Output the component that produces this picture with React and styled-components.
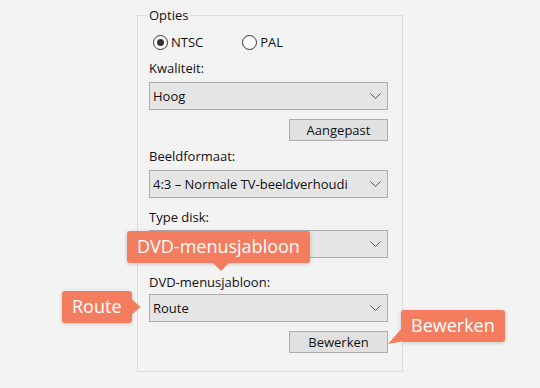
import React from "react";
import styled, { createGlobalStyle, css } from "styled-components";

const GlobalStyle = createGlobalStyle`
  html, body {
    margin: 0;
    background: #f3f3f3;
  }
`;

const Stage = styled.div`
  position: relative;
  width: 540px;
  height: 388px;
  box-sizing: border-box;
  padding: 6px 0 0 137px;
  font-family: "Open Sans", "Noto Sans", sans-serif;
  font-size: 12.5px;
  color: #111;
`;

const GroupBox = styled.fieldset`
  margin: 0;
  width: 266px;
  height: 366px;
  box-sizing: border-box;
  border: 1px solid #dcdcdc;
  padding: 8px 14px 0 11px;
`;

const Legend = styled.legend`
  font-size: 13px;
  line-height: 18px;
  padding: 0 2px;
  margin-left: -2px;
  color: #111;
`;

const Column = styled.div`
  display: flex;
  flex-direction: column;
  align-items: flex-start;
`;

const RadioRow = styled.div`
  display: flex;
  align-items: center;
  height: 20px;
  padding-left: 4px;
  gap: 39px;
`;

const RadioOption = styled.label`
  display: flex;
  align-items: center;
  gap: 3px;
  font-size: 13px;
`;

const RadioDot = styled.span`
  width: 15px;
  height: 15px;
  box-sizing: border-box;
  border-radius: 50%;
  border: 1px solid #333;
  background: #fff;
  display: flex;
  align-items: center;
  justify-content: center;

  ${(p) =>
    p.$checked &&
    css`
      &::after {
        content: "";
        width: 7px;
        height: 7px;
        border-radius: 50%;
        background: #333;
      }
    `}
`;

const FieldLabel = styled.div`
  line-height: 18px;
  font-size: 13px;
  margin-top: ${(p) => p.$gap}px;
`;

const Select = styled.div`
  width: 239px;
  height: 28px;
  box-sizing: border-box;
  margin-top: ${(p) => p.$gap}px;
  border: 1px solid #adadad;
  background: #e5e5e5;
  display: flex;
  align-items: center;
  justify-content: space-between;
  padding: 0 6px 0 3px;
  font-size: 13px;
  white-space: nowrap;
  overflow: hidden;
`;

const Button = styled.div`
  align-self: flex-end;
  width: 99px;
  height: 22px;
  box-sizing: border-box;
  margin-top: 9px;
  border: 1px solid #adadad;
  background: #e1e1e1;
  display: flex;
  align-items: center;
  justify-content: center;
  font-size: 13px;
`;

const Callout = styled.div`
  position: absolute;
  left: ${(p) => p.$x}px;
  top: ${(p) => p.$y}px;
  padding: 0 10px;
  height: 32px;
  line-height: 31px;
  background: #f47c5f;
  color: #fff;
  font-size: 18px;
  border-radius: 3px;
  box-shadow: 0 1px 4px rgba(0, 0, 0, 0.18);
  white-space: nowrap;

  &::after {
    content: "";
    position: absolute;
    background: #f47c5f;
    ${(p) =>
      p.$tail === "down" &&
      css`
        left: ${p.$tailAt}px;
        bottom: -8px;
        width: 16px;
        height: 8px;
        clip-path: polygon(0 0, 100% 0, 50% 100%);
      `}
    ${(p) =>
      p.$tail === "right" &&
      css`
        right: -9px;
        top: ${p.$tailAt}px;
        width: 9px;
        height: 16px;
        clip-path: polygon(0 0, 100% 50%, 0 100%);
      `}
    ${(p) =>
      p.$tail === "downleft" &&
      css`
        left: -13px;
        bottom: -2px;
        width: 14px;
        height: 16px;
        clip-path: polygon(100% 0, 100% 85%, 0 100%);
      `}
  }
`;

const Chevron = () => (
  <svg width="11" height="6" viewBox="0 0 11 6">
    <polyline points="0.5,0.5 5.5,5.5 10.5,0.5" fill="none" stroke="#555" strokeWidth="1" />
  </svg>
);

export default function App() {
  return (
    <Stage>
      <GlobalStyle />
      <GroupBox>
        <Legend>Opties</Legend>
        <Column>
          <RadioRow>
            <RadioOption>
              <RadioDot $checked />
              NTSC
            </RadioOption>
            <RadioOption>
              <RadioDot />
              PAL
            </RadioOption>
          </RadioRow>

          <FieldLabel $gap={7}>Kwaliteit:</FieldLabel>
          <Select $gap={5}>
            <span>Hoog</span>
            <Chevron />
          </Select>
          <Button>Aangepast</Button>

          <FieldLabel $gap={6}>Beeldformaat:</FieldLabel>
          <Select $gap={5}>
            <span>4:3 – Normale TV-beeldverhoudi</span>
            <Chevron />
          </Select>

          <FieldLabel $gap={10}>Type disk:</FieldLabel>
          <Select $gap={4}>
            <span />
            <Chevron />
          </Select>

          <FieldLabel $gap={15}>DVD-menusjabloon:</FieldLabel>
          <Select $gap={3}>
            <span>Route</span>
            <Chevron />
          </Select>
          <Button>Bewerken</Button>
        </Column>
      </GroupBox>

      <Callout $x={127} $y={231} $tail="down" $tailAt={86}>
        DVD-menusjabloon
      </Callout>
      <Callout $x={62} $y={291} $tail="right" $tailAt={8}>
        Route
      </Callout>
      <Callout $x={401} $y={310} $tail="downleft">
        Bewerken
      </Callout>
    </Stage>
  );
}
